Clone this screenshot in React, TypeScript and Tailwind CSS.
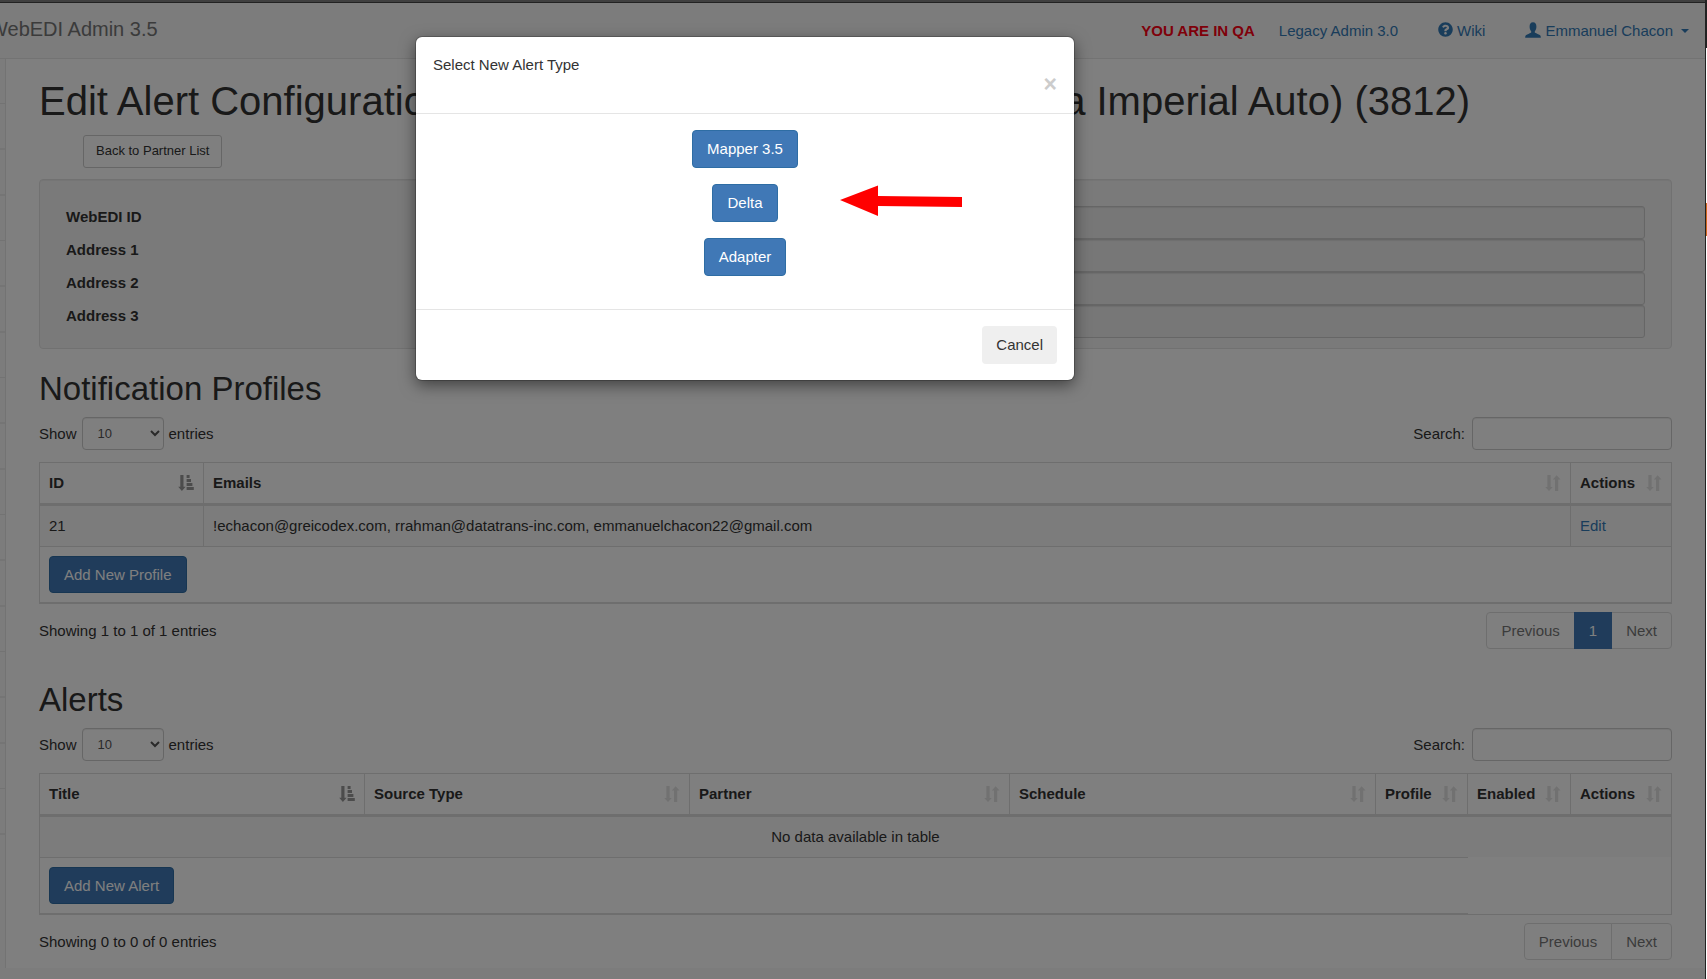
import type { ReactNode } from 'react';
import { FaQuestionCircle } from 'react-icons/fa';

const SIDEBAR_ITEMS = Array.from({ length: 17 }, (_, i) => i);
const PARTNER_FIELDS = ['WebEDI ID', 'Address 1', 'Address 2', 'Address 3'];
const ALERT_TYPES = ['Mapper 3.5', 'Delta', 'Adapter'];

type Column = { title: string; width: string };

const PROFILE_COLUMNS: Column[] = [
  { title: 'ID', width: 'w-[164px]' },
  { title: 'Emails', width: '' },
  { title: 'Actions', width: 'w-[100px]' },
];

const ALERT_COLUMNS: Column[] = [
  { title: 'Title', width: 'w-[325px]' },
  { title: 'Source Type', width: 'w-[325px]' },
  { title: 'Partner', width: 'w-[320px]' },
  { title: 'Schedule', width: '' },
  { title: 'Profile', width: 'w-[92px]' },
  { title: 'Enabled', width: 'w-[103px]' },
  { title: 'Actions', width: 'w-[100px]' },
];

function UserIcon() {
  return (
    <svg viewBox="0 0 16 16" className="h-4 w-4 fill-current" aria-hidden="true">
      <path d="M8 0.3C10.3 0.3 11.4 2 11.4 4.6C11.4 6.6 10.8 8.2 9.9 9.2C9.6 9.7 9.7 10.5 10.1 10.8C11.6 11.7 13.6 12.2 14.8 13C15.6 13.6 15.8 14.4 15.8 15.7H0.2C0.2 14.4 0.4 13.6 1.2 13C2.4 12.2 4.4 11.7 5.9 10.8C6.3 10.5 6.4 9.7 6.1 9.2C5.2 8.2 4.6 6.6 4.6 4.6C4.6 2 5.7 0.3 8 0.3Z" />
    </svg>
  );
}

function SortIcon({ active }: { active: boolean }) {
  return active ? (
    <svg viewBox="0 0 16 16" className="h-4 w-4 fill-[#999]" aria-hidden="true">
      <path d="M2.3 0H5.5V11.8H7.6L3.9 16L0.2 11.8H2.3Z" />
      <path d="M8.6 0H11.6V3H8.6ZM8.6 4H13V7H8.6ZM8.6 8H14.4V11H8.6ZM8.6 12H15.8V15H8.6Z" />
    </svg>
  ) : (
    <svg viewBox="0 0 16 16" className="h-4 w-4 fill-[#e2e2e2]" aria-hidden="true">
      <path d="M2.4 0H5.6V12H7.8L4 16L0.2 12H2.4Z" />
      <path d="M10 16H13.2V4.4H15.6L11.6 0.2L7.8 4.4H10Z" />
    </svg>
  );
}

function PrimaryButton({ children, size }: { children: ReactNode; size: string }) {
  return (
    <button
      type="button"
      className={`rounded border border-[#2e6da4] bg-[#4078b6] px-[14px] pb-px leading-[21px] text-white ${size}`}
    >
      {children}
    </button>
  );
}

function TableHead({ columns }: { columns: Column[] }) {
  return (
    <thead>
      <tr>
        {columns.map((column, i) => (
          <th
            key={column.title}
            scope="col"
            className={`border-r border-b-2 border-[#ddd] p-[9px] text-left font-bold last:border-r-0 ${column.width}`}
          >
            <div className="flex items-center justify-between">
              <span>{column.title}</span>
              <SortIcon active={i === 0} />
            </div>
          </th>
        ))}
      </tr>
    </thead>
  );
}

type SectionProps = {
  id: string;
  title: string;
  columns: Column[];
  body: ReactNode;
  addLabel: string;
  footSpan: number;
  info: string;
  pages: string[];
};

function TableSection({ id, title, columns, body, addLabel, footSpan, info, pages }: SectionProps) {
  return (
    <section className="mb-8 last:mb-0">
      <h2 className="mb-[9px] text-[33px] leading-[38px]">{title}</h2>
      <div className="mb-3 flex items-center justify-between">
        <div className="flex items-center gap-[5px]">
          <label htmlFor={`${id}-length`}>Show</label>
          <select
            id={`${id}-length`}
            className="h-[33px] w-[82px] rounded border border-[#ccc] bg-white px-[11px] text-[13px] text-[#555] shadow-[inset_0_1px_1px_rgba(0,0,0,0.075)]"
          >
            <option>10</option>
            <option>25</option>
            <option>50</option>
            <option>100</option>
          </select>
          <span>entries</span>
        </div>
        <div className="flex items-center gap-[7px]">
          <label htmlFor={`${id}-search`}>Search:</label>
          <input
            id={`${id}-search`}
            type="search"
            className="h-[33px] w-[200px] rounded border border-[#ccc] bg-white px-[11px] text-[13px] shadow-[inset_0_1px_1px_rgba(0,0,0,0.075)]"
          />
        </div>
      </div>
      <table className="w-full table-fixed border-separate border-spacing-0 border border-[#ddd]">
        <TableHead columns={columns} />
        <tbody>{body}</tbody>
        <tfoot>
          <tr>
            <td colSpan={footSpan} className="border-t border-b border-[#ddd] p-[9px]">
              <div className="flex">
                <PrimaryButton size="h-[37px]">{addLabel}</PrimaryButton>
              </div>
            </td>
          </tr>
        </tfoot>
      </table>
      <div className="mt-2 flex items-center justify-between">
        <p>{info}</p>
        <nav aria-label={`${title} pages`}>
          <ul className="flex">
            {pages.map((page) => {
              const current = page === '1';
              return (
                <li key={page} className="group -ml-px first:ml-0">
                  <a
                    href={`#${id}`}
                    className={`flex h-[37px] items-center border px-[14px] group-first:rounded-l group-last:rounded-r ${
                      current ? 'relative border-[#4078b6] bg-[#4078b6] text-white' : 'border-[#ddd] bg-white text-[#777]'
                    }`}
                  >
                    {page}
                  </a>
                </li>
              );
            })}
          </ul>
        </nav>
      </div>
    </section>
  );
}

function NavBar() {
  return (
    <header className="flex h-14 items-center justify-between border-b border-[#e7e7e7] bg-[#f8f8f8] pr-4 pb-[3px]">
      <a href="#home" className="-ml-[11px] text-[20px] whitespace-nowrap text-[#777]">
        WebEDI Admin 3.5
      </a>
      <nav className="mt-[3px] flex items-center text-[#337ab7]">
        <strong className="mr-6 text-[#ff0014]">YOU ARE IN QA</strong>
        <a href="#legacy" className="mr-10">Legacy Admin 3.0</a>
        <a href="#wiki" className="mr-10 flex items-center gap-1">
          <FaQuestionCircle className="mb-0.5 h-[15px] w-[15px]" />
          Wiki
        </a>
        <a href="#account" className="flex items-center gap-1">
          <span className="mb-0.5"><UserIcon /></span>
          Emmanuel Chacon
          <span className="ml-1 border-x-4 border-t-4 border-x-transparent border-t-current" />
        </a>
      </nav>
    </header>
  );
}

function AlertTypeDialog() {
  return (
    <div className="absolute inset-0 flex items-start justify-center bg-black/50 pt-[34px] pr-[215px]">
      <div
        role="dialog"
        aria-modal="true"
        aria-labelledby="dialog-title"
        className="relative w-[658px] rounded-md bg-white shadow-[0_0_0_1px_rgba(0,0,0,0.2),0_5px_16px_rgba(0,0,0,0.5)]"
      >
        <div className="flex h-[77px] justify-between border-b border-[#e5e5e5] px-[17px] pt-[17px]">
          <h2 id="dialog-title">Select New Alert Type</h2>
          <button type="button" aria-label="Close" className="mt-[19px] h-[23px] text-[23px] leading-[23px] font-bold text-[#ccc]">
            ×
          </button>
        </div>
        <div className="flex flex-col items-center gap-4 pt-4 pb-[33px]">
          {ALERT_TYPES.map((type) => (
            <PrimaryButton key={type} size="h-[38px]">{type}</PrimaryButton>
          ))}
        </div>
        <div className="flex justify-end border-t border-[#e5e5e5] px-[17px] py-4">
          <button type="button" className="h-[38px] rounded bg-[#efefef] px-[14px]">Cancel</button>
        </div>
        <svg viewBox="0 0 122 32" className="absolute top-[148px] left-[424px] h-8 w-[122px] fill-[#ff0000]" aria-hidden="true">
          <path d="M0 15L38 0.5V11L122 12V22L38 21V31Z" />
        </svg>
      </div>
    </div>
  );
}

export default function App() {
  return (
    <div
      className="flex min-h-screen overflow-hidden text-[15px] leading-[22px] text-[#333]"
      style={{ fontFamily: '"Liberation Sans", Arial, sans-serif' }}
    >
      <div className="flex min-w-0 flex-1 flex-col border-t-2 border-[#404040]">
        <div className="h-px bg-[#222]" />
        <div className="relative flex flex-1 flex-col bg-[#f8f8f8]">
          <NavBar />
          <div className="flex">
            <aside className="w-1.5 border-r border-[#e7e7e7]">
              <ul>
                {SIDEBAR_ITEMS.map((i) => (
                  <li key={i} className={i % 3 ? 'h-[46px] border-b-2 border-[#ebebeb]' : 'h-[45px] border-b border-[#e7e7e7]'} />
                ))}
              </ul>
            </aside>
            <main className="min-w-0 flex-1 bg-white px-[33px] pt-5 pb-2">
              <h1 className="flex justify-between pr-[202px] text-[40px] leading-[44px] whitespace-nowrap">
                <span>Edit Alert Configuration</span>
                <span>a Imperial Auto) (3812)</span>
              </h1>
              <button type="button" className="mt-3 ml-11 block h-[33px] rounded-[3px] border border-[#ccc] bg-white px-3 pb-0.5 text-[13px]">
                Back to Partner List
              </button>
              <form className="mt-[11px] mb-[21px] rounded border border-[#e3e3e3] bg-[#f5f5f5] px-[26px] pt-[26px] pb-[10px] shadow-[inset_0_1px_1px_rgba(0,0,0,0.05)]">
                {PARTNER_FIELDS.map((field, i) => (
                  <div key={field} className="flex h-[33px] items-start">
                    <label htmlFor={`field-${i}`} className="w-1/3 font-bold">{field}</label>
                    <input
                      id={`field-${i}`}
                      readOnly
                      className="h-[33px] min-w-0 flex-1 rounded-[3px] border border-[#ccc] bg-[#eee] px-[11px] shadow-[inset_0_1px_1px_rgba(0,0,0,0.075)]"
                    />
                  </div>
                ))}
              </form>
              <TableSection
                id="profiles"
                title="Notification Profiles"
                columns={PROFILE_COLUMNS}
                body={
                  <tr className="bg-[#f9f9f9]">
                    <td className="border-t border-r border-[#ddd] p-[9px]">21</td>
                    <td className="border-t border-r border-[#ddd] p-[9px]">
                      !echacon@greicodex.com, rrahman@datatrans-inc.com, emmanuelchacon22@gmail.com
                    </td>
                    <td className="border-t border-[#ddd] p-[9px]">
                      <a href="#edit" className="text-[#337ab7]">Edit</a>
                    </td>
                  </tr>
                }
                addLabel="Add New Profile"
                footSpan={3}
                info="Showing 1 to 1 of 1 entries"
                pages={['Previous', '1', 'Next']}
              />
              <TableSection
                id="alerts"
                title="Alerts"
                columns={ALERT_COLUMNS}
                body={
                  <tr className="bg-[#f9f9f9]">
                    <td colSpan={7} className="border-t border-[#ddd] p-[9px] text-center">No data available in table</td>
                  </tr>
                }
                addLabel="Add New Alert"
                footSpan={5}
                info="Showing 0 to 0 of 0 entries"
                pages={['Previous', 'Next']}
              />
            </main>
          </div>
          <AlertTypeDialog />
        </div>
      </div>
      <div className="w-px bg-[#222]" />
      <div className="flex w-px flex-col bg-white">
        <div className="h-12 bg-[#222]" />
        <div className="mt-[155px] h-[33px] bg-[#d2691e]" />
      </div>
    </div>
  );
}
